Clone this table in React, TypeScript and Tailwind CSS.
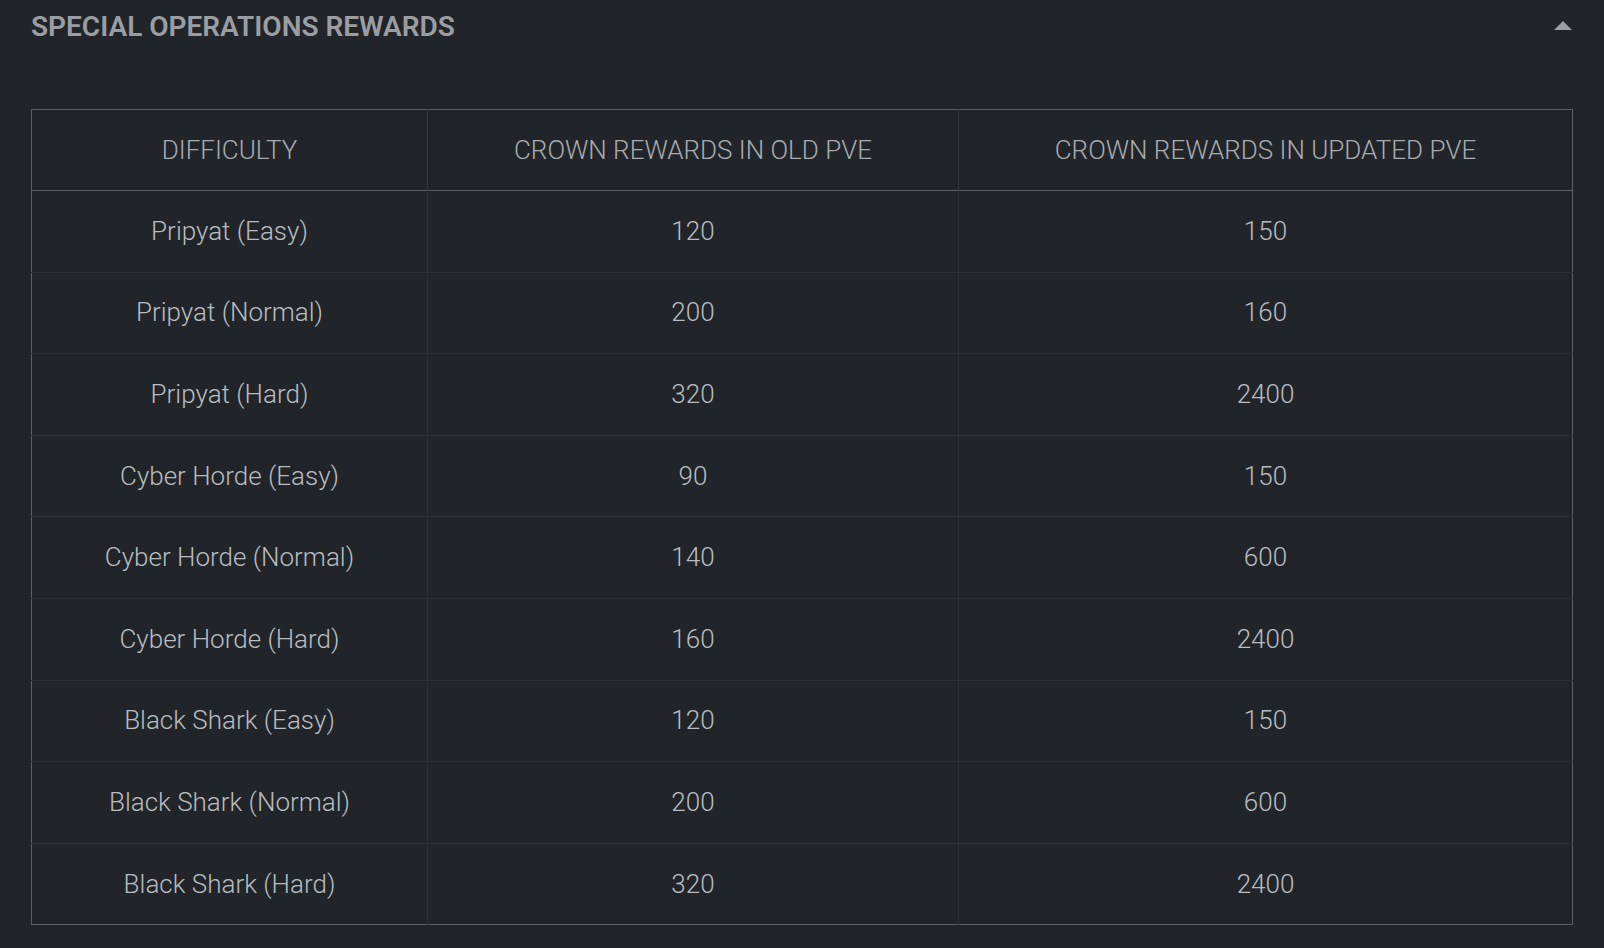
import React from 'react';

type Row = { difficulty: string; oldPve: string; newPve: string };

const rows: Row[] = [
  { difficulty: 'Pripyat (Easy)', oldPve: '120', newPve: '150' },
  { difficulty: 'Pripyat (Normal)', oldPve: '200', newPve: '160' },
  { difficulty: 'Pripyat (Hard)', oldPve: '320', newPve: '2400' },
  { difficulty: 'Cyber Horde (Easy)', oldPve: '90', newPve: '150' },
  { difficulty: 'Cyber Horde (Normal)', oldPve: '140', newPve: '600' },
  { difficulty: 'Cyber Horde (Hard)', oldPve: '160', newPve: '2400' },
  { difficulty: 'Black Shark (Easy)', oldPve: '120', newPve: '150' },
  { difficulty: 'Black Shark (Normal)', oldPve: '200', newPve: '600' },
  { difficulty: 'Black Shark (Hard)', oldPve: '320', newPve: '2400' },
];

export default function App() {
  return (
    <div className="min-h-screen bg-[#212529] pl-[31px] pr-[32px] font-['Roboto',sans-serif]">
      {/* section header */}
      <div className="flex items-start justify-between pt-[13px]">
        <h2 className="text-[28px] leading-none font-semibold text-[#9a9ea3] uppercase">
          Special Operations Rewards
        </h2>
        <button type="button" className="mt-[8px]" aria-label="Collapse">
          <svg width="18" height="9" viewBox="0 0 18 9">
            <polygon points="9,0 18,9 0,9" fill="#9a9ea3" />
          </svg>
        </button>
      </div>

      <table className="mt-[68px] w-full table-fixed border-collapse border border-[#5c6064] text-center">
        <colgroup>
          <col className="w-[396px]" />
          <col className="w-[531px]" />
          <col className="w-[614px]" />
        </colgroup>
        <thead>
          <tr className="h-[81px] border-b border-[#5c6064]">
            <th className="text-[26px] font-light text-[#a8acb0] uppercase">Difficulty</th>
            <th className="border-l border-[#34383c] text-[26px] font-light text-[#a8acb0] uppercase">
              Crown rewards in old PvE
            </th>
            <th className="border-l border-[#34383c] text-[26px] font-light text-[#a8acb0] uppercase">
              Crown rewards in updated PvE
            </th>
          </tr>
        </thead>
        <tbody>
          {rows.map((row) => (
            <tr key={row.difficulty} className="h-[81.6px] border-t border-[#2d3135]">
              <td className="text-[26px] font-light text-[#b8bcc0]">{row.difficulty}</td>
              <td className="border-l border-[#2d3135] text-[26px] font-light text-[#b8bcc0]">{row.oldPve}</td>
              <td className="border-l border-[#2d3135] text-[26px] font-light text-[#b8bcc0]">{row.newPve}</td>
            </tr>
          ))}
        </tbody>
      </table>
    </div>
  );
}
